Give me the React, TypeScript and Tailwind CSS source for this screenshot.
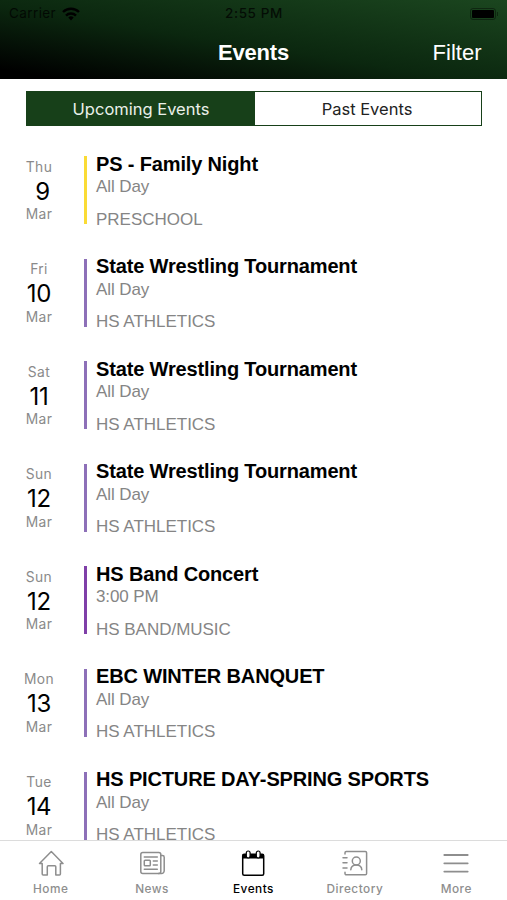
import type { ReactNode } from "react";

interface EventItem {
  weekday: string;
  day: number;
  title: string;
  time: string;
  category: string;
  bar: string;
}

const events: EventItem[] = [
  { weekday: "Thu", day: 9, title: "PS - Family Night", time: "All Day", category: "PRESCHOOL", bar: "bg-[#fadb35]" },
  { weekday: "Fri", day: 10, title: "State Wrestling Tournament", time: "All Day", category: "HS ATHLETICS", bar: "bg-[#8d70b8]" },
  { weekday: "Sat", day: 11, title: "State Wrestling Tournament", time: "All Day", category: "HS ATHLETICS", bar: "bg-[#8d70b8]" },
  { weekday: "Sun", day: 12, title: "State Wrestling Tournament", time: "All Day", category: "HS ATHLETICS", bar: "bg-[#8d70b8]" },
  { weekday: "Sun", day: 12, title: "HS Band Concert", time: "3:00 PM", category: "HS BAND/MUSIC", bar: "bg-[#7f3fa8]" },
  { weekday: "Mon", day: 13, title: "EBC WINTER BANQUET", time: "All Day", category: "HS ATHLETICS", bar: "bg-[#8d70b8]" },
  { weekday: "Tue", day: 14, title: "HS PICTURE DAY-SPRING SPORTS", time: "All Day", category: "HS ATHLETICS", bar: "bg-[#8d70b8]" },
];

function TabIcon({ children }: { children: ReactNode }) {
  return (
    <svg
      className="h-[26px] w-[26px]"
      viewBox="0 0 26 26"
      fill="none"
      stroke="currentColor"
      strokeWidth="1.5"
      strokeLinecap="round"
      strokeLinejoin="round"
    >
      {children}
    </svg>
  );
}

const tabs: { label: string; active?: boolean; icon: ReactNode }[] = [
  {
    label: "Home",
    icon: <path d="M1.500 13.500 13.300 1.500l11.700 12h-2.600V24a1 1 0 0 1-1 1h-3.600v-8.300a1 1 0 0 0-1-1h-6.500a1 1 0 0 0-1 1V25H5.200a1 1 0 0 1-1-1V13.500Z" />,
  },
  {
    label: "News",
    icon: (
      <>
        <rect x="1.8" y="2.5" width="20" height="21" rx="2" />
        <path d="M21.800 5.500h1.700a1.700 1.700 0 0 1 1.700 1.700v13.600a2.700 2.700 0 0 1-2.700 2.700h-3" />
        <rect x="5.3" y="10.3" width="6" height="5.4" rx="0.8" />
        <path d="M5.300 7h13M14.300 11h4M14.300 15h4M5.300 19.200h13" />
      </>
    ),
  },
  {
    label: "Events",
    active: true,
    icon: (
      <>
        <rect x="2.7" y="4.2" width="21" height="21" rx="1.5" />
        <path d="M2.700 4h21v4.500h-21z" fill="currentColor" stroke="none" />
        <rect x="6.3" y="1" width="3.8" height="7" rx="1.9" fill="#fff" strokeWidth="1.2" />
        <rect x="16.3" y="1" width="3.8" height="7" rx="1.9" fill="#fff" strokeWidth="1.2" />
      </>
    ),
  },
  {
    label: "Directory",
    icon: (
      <>
        <path d="M3 4V2.800a1.300 1.300 0 0 1 1.300-1.300h19a1.300 1.300 0 0 1 1.300 1.300v20.700a1.300 1.300 0 0 1-1.300 1.300h-19A1.300 1.300 0 0 1 3 23.500v-1.200" />
        <path d="M1 7.700h4M1 12.800h4M1 18h4" />
        <circle cx="14.3" cy="11" r="4" />
        <path d="M8.800 19.800c.2-3 2.200-4.800 5.500-4.800s5.300 1.800 5.500 4.800" />
      </>
    ),
  },
  {
    label: "More",
    icon: <path d="M1.300 5h23.400M1.300 13.300h23.400M1.300 21.600h23.400" strokeWidth="1.800" />,
  },
];

function StatusBar() {
  return (
    <div className="grid h-[27px] grid-cols-3 items-center px-[9px] text-[13.500px] leading-none text-black/75">
      <div className="flex items-center gap-[6px]">
        <span className="tracking-[0.4px]">Carrier</span>
        <svg className="h-[14px] w-[18px]" viewBox="0 0 18 14" fill="none" stroke="#000" strokeWidth="2.400">
          <path d="M1 5a11.500 11.500 0 0 1 16 0M4 8.600a7 7 0 0 1 10 0" />
          <path d="m9 13.500-2.700-2.900a4 4 0 0 1 5.400 0Z" fill="#000" stroke="none" />
        </svg>
      </div>
      <span className="pl-px text-center font-medium tracking-[0.6px]">2:55 PM</span>
      <div className="flex items-center justify-end gap-px">
        <div className="h-[12px] w-[26px] rounded-[3px] border border-black/40 p-px">
          <div className="h-full rounded-[1px] bg-black" />
        </div>
        <div className="h-1 w-px bg-black/40" />
      </div>
    </div>
  );
}

function EventRow({ weekday, day, title, time, category, bar }: EventItem) {
  return (
    <li className="flex h-[102.600px] shrink-0">
      <div className="ml-[24px] flex h-[68px] w-[30px] flex-col items-center text-[13.800px] text-[#8a8a8a]">
        <span className="mt-[1.500px] leading-[18px] tracking-[0.400px]">{weekday}</span>
        <span className={`mt-[4px] text-[24px] leading-[24px] tracking-[-0.300px] text-black ${day < 10 ? "pl-[7px]" : ""}`}>
          {day}
        </span>
        <span className="mt-[1.500px] leading-[18px] tracking-[0.400px]">Mar</span>
      </div>
      <div className={`ml-[30px] h-[68px] w-[2.500px] ${bar}`} />
      <div className="ml-[9.500px] flex flex-col whitespace-nowrap font-['Liberation_Sans',Arial,sans-serif] text-[17px] text-[#858585]">
        <h2 className="-mt-[4.500px] text-[20px] font-bold leading-[24px] tracking-[-0.150px] text-black">{title}</h2>
        <span className="mt-[0.500px] leading-[22px] tracking-[-0.100px]">{time}</span>
        <span className="mt-[11.500px] leading-[20px] tracking-[-0.020px]">{category}</span>
      </div>
    </li>
  );
}

export default function App() {
  return (
    <div className="flex h-[900px] w-[507px] flex-col overflow-hidden bg-white font-[Inter,sans-serif]">
      <header className="h-[79px] shrink-0 bg-[linear-gradient(189deg,#1b461f_0%,#0b270f_54%,#000_94%)]">
        <StatusBar />
        <div className="grid h-[50px] grid-cols-3 items-center px-[25.500px] font-['Liberation_Sans',Arial,sans-serif] text-[22px] text-white">
          <h1 className="col-start-2 text-center font-bold tracking-[-0.200px]">Events</h1>
          <button className="text-right">Filter</button>
        </div>
      </header>

      <main className="flex min-h-0 flex-1 flex-col overflow-hidden">
        <div className="mx-[26px] mt-[12px] grid h-[35px] w-[456px] shrink-0 grid-cols-[228px_1fr] border border-[#174019] text-[16.500px]">
          <button className="bg-[#174019] pt-px text-[#eaf0ea]">Upcoming Events</button>
          <button className="pt-px pr-[2px] text-[#222]">Past Events</button>
        </div>
        <ul className="mt-[30px] flex flex-col">
          {events.map((event, i) => (
            <EventRow key={i} {...event} />
          ))}
        </ul>
      </main>

      <nav className="grid h-[60px] shrink-0 grid-cols-5 border-t border-[#dcdcdc] bg-white">
        {tabs.map((tab) => (
          <button
            key={tab.label}
            className={`flex flex-col items-center pt-[9px] text-[11.800px] font-medium tracking-[0.500px] ${tab.active ? "text-black" : "text-[#8e8e8e]"}`}
          >
            <TabIcon>{tab.icon}</TabIcon>
            <span className="mt-[5px] leading-[16px]">{tab.label}</span>
          </button>
        ))}
      </nav>
    </div>
  );
}
